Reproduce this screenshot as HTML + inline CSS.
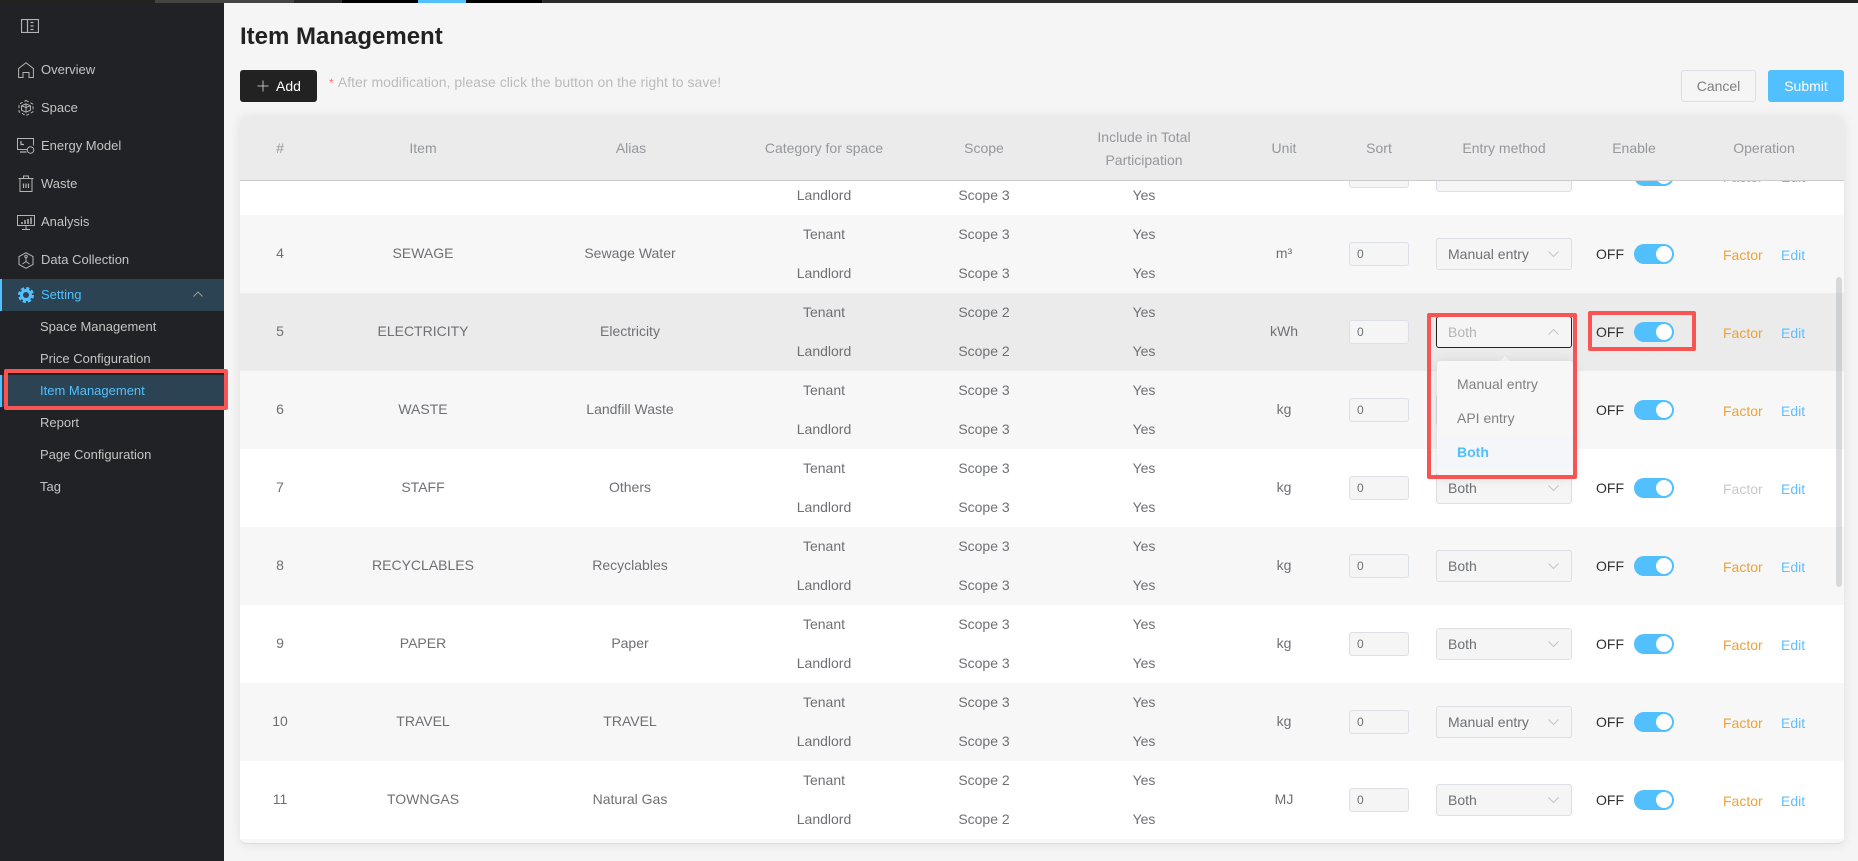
<!DOCTYPE html>
<html><head><meta charset="utf-8"><title>Item Management</title>
<style>
*{box-sizing:border-box}
html,body{margin:0;padding:0;width:1858px;height:861px;overflow:hidden;background:#f5f5f5;font-family:"Liberation Sans",sans-serif;font-size:14px;color:#6e7074}
.abs{position:absolute}
#top{position:absolute;left:0;top:0;width:1858px;height:3px;background:#222;z-index:9}
#top i{position:absolute;top:0;height:3px}
#side{position:absolute;left:0;top:3px;width:224px;height:858px;background:#202225}
.m{position:absolute;left:41px;font-size:13px;line-height:20px;color:#c4c4c4;white-space:nowrap}
.s{position:absolute;left:40px;font-size:13px;line-height:20px;color:#c4c4c4;white-space:nowrap}
.ic{position:absolute;fill:none;stroke:#b4b4b4;stroke-width:1}
h1{position:absolute;left:240px;top:23px;margin:0;font-size:24px;line-height:28px;font-weight:bold;color:#222}
.btn{position:absolute;top:70px;height:32px;border-radius:3px;line-height:32px;text-align:center}
#card{position:absolute;left:240px;top:117px;width:1604px;height:727px;background:#f7f7f7;border-radius:6px;box-shadow:0 0 12px rgba(0,0,0,.09);border-bottom:1px solid #ddd}
#head{position:absolute;left:0;top:0;width:1604px;height:64px;background:#ebebeb;border-bottom:1px solid #ccc;border-radius:6px 6px 0 0;color:#95979c;z-index:2}
#head span{position:absolute;top:0;line-height:62px;text-align:center;white-space:nowrap}
#body{position:absolute;left:0;top:64px;width:1604px;height:658px;overflow:hidden;background:#fff}
.r{position:absolute;left:0;width:1604px;height:78px;background:#fff}
.g{background:#f7f7f7}
.h{background:#ebebeb}
.r>div{position:absolute;top:0;text-align:center;line-height:76px;white-space:nowrap}
.r>div.t{line-height:39px}
.r>div.t div{height:39px}
.c1{left:0;width:80px}.c2{left:83px;width:200px}.c3{left:290px;width:200px}.c4{left:504px;width:160px}.c5{left:684px;width:120px}.c6{left:824px;width:160px}.c7{left:1004px;width:80px}
.r>.in{left:1109px;top:27px;width:60px;height:24px;background:#f5f5f5;border:1px solid #dcdfe6;border-radius:3px;font-size:12px;line-height:22px;text-align:left;padding-left:7px}
.r>.se{left:1196px;top:23px;width:136px;height:32px;background:#f5f5f5;border:1px solid #dcdfe6;border-radius:3px;line-height:30px;text-align:left;padding-left:11px}
.se svg{position:absolute;left:111px;top:12px}
.r>.of{left:1356px;color:#303133;line-height:78px}
.r>.sw{left:1394px;top:29px;width:40px;height:20px;border-radius:10px;background:#52bfff}
.sw b{position:absolute;left:22px;top:2px;width:16px;height:16px;border-radius:50%;background:#fff}
.r>.fa{left:1483px;color:#eea236;line-height:80px}
.r>.ed{left:1541px;color:#5fc0fb;line-height:80px}
.red{position:absolute;border:4px solid #f95454;border-radius:2px;z-index:6}
#dd{position:absolute;left:1437px;top:361px;width:136px;height:114px;background:#f7f7f7;border-radius:3px;box-shadow:0 2px 12px rgba(0,0,0,.14);z-index:5;padding-top:6px}
#dd div{height:34px;line-height:34px;padding-left:20px;color:#808080}
#dd .on{background:#f4f6fa;color:#52bfff;font-weight:bold}
#arr{position:absolute;left:1499px;top:356px;width:0;height:0;border-left:6px solid transparent;border-right:6px solid transparent;border-bottom:6px solid #f7f7f7;z-index:5}
#bar{position:absolute;left:1836px;top:277px;width:6px;height:310px;border-radius:3px;background:rgba(144,147,153,.3);z-index:4}
</style></head><body>
<div id="top">
<i style="left:155px;width:139px;background:#444"></i><i style="left:294px;width:48px;background:#2a2a2a"></i><i style="left:342px;width:76px;background:#000"></i><i style="left:418px;width:48px;background:#52bfff"></i><i style="left:466px;width:76px;background:#000"></i><i style="left:542px;width:858px;background:#2b2b2b"></i>
</div>
<div id="side">
<svg class="ic" style="left:21px;top:16px" width="18" height="14" viewBox="0 0 18 14"><rect x=".5" y=".5" width="17" height="13" stroke-width="1.2"/><path d="M6.5 1v12" stroke-width="1.2"/><path d="M9.5 3.5h3M9.5 7h3M9.5 10.500h3" stroke-width="1.3"/></svg>
<svg class="ic" style="left:18px;top:59px" width="16" height="16" viewBox="0 0 16 16"><path d="M.6 15.500V6.500L8 .7l7.400 5.800v9h-4.400v-5H5v5z"/></svg>
<svg class="ic" style="left:18px;top:97px" width="16" height="16" viewBox="0 0 16 16"><path d="M8 .5l7 3.700v7.600l-7 3.700-7-3.700V4.200z" stroke-dasharray="3 2"/><path d="M8 3.800l4.500 2v4.400L8 12.200l-4.500-2V5.800zM8 3.800v8.400M3.500 5.800 8 7.500l4.500-1.700"/></svg>
<svg class="ic" style="left:17px;top:135px" width="18" height="16" viewBox="0 0 18 16"><path d="M10 11.500H.5V.5h16v7"/><path d="M4 3v3.500h3M3 14h6.500" stroke-width="1.200"/><circle cx="13.500" cy="12" r="3.300"/></svg>
<svg class="ic" style="left:18px;top:172px" width="16" height="17" viewBox="0 0 16 17"><path d="M.5 3.500h15M2 3.500v13h12v-13M5.500 3.500V1h5v2.500"/><path d="M5.500 8.500v4.500M8 8.500v4.500M10.500 8.500v4.500" stroke-width="1.200"/></svg>
<svg class="ic" style="left:17px;top:212px" width="18" height="15" viewBox="0 0 18 15"><rect x=".5" y=".5" width="17" height="10"/><path d="M9 10.500v4M5 14.500h8"/><path d="M5 9V7M8 9V5M11 9V4M14 9V2.500" stroke-width="1.500"/></svg>
<svg class="ic" style="left:18px;top:249px" width="16" height="17" viewBox="0 0 16 17"><path d="M8 .7l7 3.900v7.800l-7 3.900-7-3.900V4.600z"/><circle cx="8" cy="4.500" r="1.200"/><path d="M8 6v3.500L4.500 12M8 9.500l3.500 2.500"/></svg>
<div class="m" style="top:57px">Overview</div>
<div class="m" style="top:95px">Space</div>
<div class="m" style="top:133px">Energy Model</div>
<div class="m" style="top:171px">Waste</div>
<div class="m" style="top:209px">Analysis</div>
<div class="m" style="top:247px">Data Collection</div>
<div class="abs" style="left:0;top:276px;width:224px;height:32px;background:#2b4353"></div>
<div class="abs" style="left:0;top:276px;width:2px;height:32px;background:#52bfff"></div>
<svg class="abs" style="left:18px;top:284px" width="16" height="16" viewBox="0 0 16 16"><circle cx="8" cy="8" r="4.500" fill="none" stroke="#52bfff" stroke-width="3"/><circle cx="8" cy="8" r="6.800" fill="none" stroke="#52bfff" stroke-width="2.400" stroke-dasharray="3.300 2.040"/></svg>
<div class="m" style="top:282px;color:#52bfff">Setting</div>
<svg class="abs" style="left:193px;top:288px" width="10" height="6" viewBox="0 0 10 6"><path d="M.5 5.500 5 1l4.500 4.500" fill="none" stroke="#999"/></svg>
<div class="s" style="top:314px">Space Management</div>
<div class="s" style="top:346px">Price Configuration</div>
<div class="abs" style="left:0;top:372px;width:224px;height:32px;background:#2b4353"></div>
<div class="abs" style="left:0;top:372px;width:2px;height:32px;background:#52bfff"></div>
<div class="s" style="top:378px;color:#52bfff">Item Management</div>
<div class="s" style="top:410px">Report</div>
<div class="s" style="top:442px">Page Configuration</div>
<div class="s" style="top:474px">Tag</div>
</div>
<div class="red" style="left:4px;top:369px;width:224px;height:41px"></div>

<h1>Item Management</h1>
<div class="btn" style="left:240px;width:77px;background:#222;color:#fff;padding-left:19px;text-align:left"><svg class="abs" style="left:17px;top:10px" width="12" height="12" viewBox="0 0 12 12"><path d="M6 .5v11M.5 6h11" stroke="#bbb" fill="none"/></svg><span style="margin-left:17px">Add</span></div>
<div class="abs" style="left:329px;top:74px;line-height:16px;color:#bbb;white-space:nowrap;letter-spacing:.03px"><span style="color:#f56c6c;font-size:12px;margin-right:1px">*</span> After modification, please click the button on the right to save!</div>
<div class="btn" style="left:1681px;width:75px;border:1px solid #dcdfe6;line-height:30px;color:#808080">Cancel</div>
<div class="btn" style="left:1768px;width:76px;background:#52bfff;color:#fff">Submit</div>

<div id="card">
<div id="head">
<span class="c1">#</span><span class="c2">Item</span><span class="c3" style="left:291px">Alias</span><span class="c4">Category for space</span><span class="c5">Scope</span>
<span class="c6" style="line-height:23px;top:9px">Include in Total<br>Participation</span>
<span class="c7">Unit</span><span style="left:1099px;width:80px">Sort</span><span style="left:1184px;width:160px">Entry method</span><span style="left:1354px;width:80px">Enable</span><span style="left:1484px;width:80px">Operation</span>
</div>
<div id="body">
<div class="r" style="top:-44px">
<div class="t c4"><div></div><div>Landlord</div></div><div class="t c5"><div></div><div>Scope 3</div></div><div class="t c6"><div></div><div>Yes</div></div>
<div class="in"></div><div class="se"></div><div class="sw"><b></b></div><div class="fa">Factor</div><div class="ed">Edit</div>
</div>
<div class="r g" style="top:34px">
<div class="c1">4</div><div class="c2">SEWAGE</div><div class="c3">Sewage Water</div>
<div class="t c4"><div>Tenant</div><div>Landlord</div></div><div class="t c5"><div>Scope 3</div><div>Scope 3</div></div><div class="t c6"><div>Yes</div><div>Yes</div></div>
<div class="c7">m³</div><div class="in">0</div>
<div class="se">Manual entry<svg width="11" height="6" viewBox="0 0 11 6"><path d="M.5.5l5 5 5-5" fill="none" stroke="#c0c4cc"/></svg></div>
<div class="of">OFF</div><div class="sw"><b></b></div><div class="fa">Factor</div><div class="ed">Edit</div>
</div>
<div class="r h" style="top:112px">
<div class="c1">5</div><div class="c2">ELECTRICITY</div><div class="c3">Electricity</div>
<div class="t c4"><div>Tenant</div><div>Landlord</div></div><div class="t c5"><div>Scope 2</div><div>Scope 2</div></div><div class="t c6"><div>Yes</div><div>Yes</div></div>
<div class="c7">kWh</div><div class="in">0</div>
<div class="se" style="border-color:#222;color:#b4b4b4">Both<svg width="11" height="6" viewBox="0 0 11 6"><path d="M.5 5.500l5-5 5 5" fill="none" stroke="#c0c4cc"/></svg></div>
<div class="of">OFF</div><div class="sw"><b></b></div><div class="fa">Factor</div><div class="ed">Edit</div>
</div>
<div class="r g" style="top:190px">
<div class="c1">6</div><div class="c2">WASTE</div><div class="c3">Landfill Waste</div>
<div class="t c4"><div>Tenant</div><div>Landlord</div></div><div class="t c5"><div>Scope 3</div><div>Scope 3</div></div><div class="t c6"><div>Yes</div><div>Yes</div></div>
<div class="c7">kg</div><div class="in">0</div>
<div class="se">Both<svg width="11" height="6" viewBox="0 0 11 6"><path d="M.5.5l5 5 5-5" fill="none" stroke="#c0c4cc"/></svg></div>
<div class="of">OFF</div><div class="sw"><b></b></div><div class="fa">Factor</div><div class="ed">Edit</div>
</div>
<div class="r" style="top:268px">
<div class="c1">7</div><div class="c2">STAFF</div><div class="c3">Others</div>
<div class="t c4"><div>Tenant</div><div>Landlord</div></div><div class="t c5"><div>Scope 3</div><div>Scope 3</div></div><div class="t c6"><div>Yes</div><div>Yes</div></div>
<div class="c7">kg</div><div class="in">0</div>
<div class="se">Both<svg width="11" height="6" viewBox="0 0 11 6"><path d="M.5.5l5 5 5-5" fill="none" stroke="#c0c4cc"/></svg></div>
<div class="of">OFF</div><div class="sw"><b></b></div><div class="fa" style="color:#c8c9cc">Factor</div><div class="ed">Edit</div>
</div>
<div class="r g" style="top:346px">
<div class="c1">8</div><div class="c2">RECYCLABLES</div><div class="c3">Recyclables</div>
<div class="t c4"><div>Tenant</div><div>Landlord</div></div><div class="t c5"><div>Scope 3</div><div>Scope 3</div></div><div class="t c6"><div>Yes</div><div>Yes</div></div>
<div class="c7">kg</div><div class="in">0</div>
<div class="se">Both<svg width="11" height="6" viewBox="0 0 11 6"><path d="M.5.5l5 5 5-5" fill="none" stroke="#c0c4cc"/></svg></div>
<div class="of">OFF</div><div class="sw"><b></b></div><div class="fa">Factor</div><div class="ed">Edit</div>
</div>
<div class="r" style="top:424px">
<div class="c1">9</div><div class="c2">PAPER</div><div class="c3">Paper</div>
<div class="t c4"><div>Tenant</div><div>Landlord</div></div><div class="t c5"><div>Scope 3</div><div>Scope 3</div></div><div class="t c6"><div>Yes</div><div>Yes</div></div>
<div class="c7">kg</div><div class="in">0</div>
<div class="se">Both<svg width="11" height="6" viewBox="0 0 11 6"><path d="M.5.5l5 5 5-5" fill="none" stroke="#c0c4cc"/></svg></div>
<div class="of">OFF</div><div class="sw"><b></b></div><div class="fa">Factor</div><div class="ed">Edit</div>
</div>
<div class="r g" style="top:502px">
<div class="c1">10</div><div class="c2">TRAVEL</div><div class="c3">TRAVEL</div>
<div class="t c4"><div>Tenant</div><div>Landlord</div></div><div class="t c5"><div>Scope 3</div><div>Scope 3</div></div><div class="t c6"><div>Yes</div><div>Yes</div></div>
<div class="c7">kg</div><div class="in">0</div>
<div class="se">Manual entry<svg width="11" height="6" viewBox="0 0 11 6"><path d="M.5.5l5 5 5-5" fill="none" stroke="#c0c4cc"/></svg></div>
<div class="of">OFF</div><div class="sw"><b></b></div><div class="fa">Factor</div><div class="ed">Edit</div>
</div>
<div class="r" style="top:580px">
<div class="c1">11</div><div class="c2">TOWNGAS</div><div class="c3">Natural Gas</div>
<div class="t c4"><div>Tenant</div><div>Landlord</div></div><div class="t c5"><div>Scope 2</div><div>Scope 2</div></div><div class="t c6"><div>Yes</div><div>Yes</div></div>
<div class="c7">MJ</div><div class="in">0</div>
<div class="se">Both<svg width="11" height="6" viewBox="0 0 11 6"><path d="M.5.5l5 5 5-5" fill="none" stroke="#c0c4cc"/></svg></div>
<div class="of">OFF</div><div class="sw"><b></b></div><div class="fa">Factor</div><div class="ed">Edit</div>
</div>
</div>
</div>
<div id="bar"></div>
<div id="arr"></div>
<div id="dd"><div>Manual entry</div><div>API entry</div><div class="on">Both</div></div>
<div class="red" style="left:1427px;top:313px;width:150px;height:166px"></div>
<div class="red" style="left:1588px;top:311px;width:108px;height:40px"></div>
</body></html>
